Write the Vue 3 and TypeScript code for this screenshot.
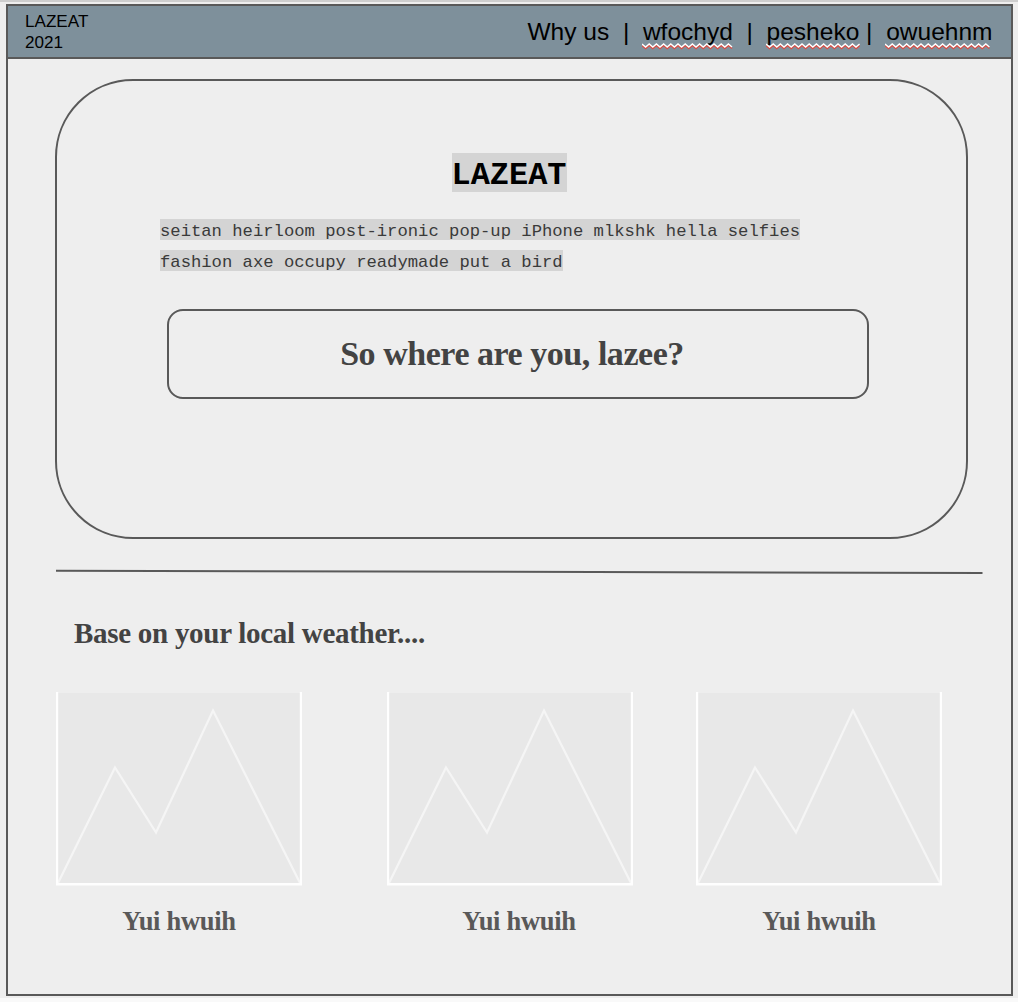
<script setup lang="ts">
interface NavPart {
  text: string
  width?: number
}

interface Card {
  id: number
  label: string
  area: string
}

const nav: NavPart[] = [
  { text: 'Why us' },
  { text: '  |  ' },
  { text: 'wfochyd', width: 91 },
  { text: '  |  ' },
  { text: 'pesheko', width: 94 },
  { text: ' |  ' },
  { text: 'owuehnm', width: 107 },
]

const lines: string[] = [
  'seitan heirloom post-ironic pop-up iPhone mlkshk hella selfies',
  'fashion axe occupy readymade put a bird',
]

const cards: Card[] = [
  { id: 1, label: 'Yui hwuih', area: 'first' },
  { id: 2, label: 'Yui hwuih', area: 'second' },
  { id: 3, label: 'Yui hwuih', area: 'third' },
]

function zigzag(width: number, top: number): string {
  const step = 3.6
  let d = `M0 ${top}`
  for (let i = 1; i * step <= width; i++) {
    d += `L${(i * step).toFixed(1)} ${i % 2 ? top + 3 : top}`
  }
  return d
}
</script>

<template>
  <div class="page">
    <div class="frame">
      <header class="bar">
        <div class="brand">LAZEAT<br />2021</div>
        <nav class="nav">
          <span v-for="(part, i) in nav" :key="i" class="part"
            >{{ part.text
            }}<svg v-if="part.width" class="squiggle" :width="part.width" height="7">
              <path :d="zigzag(part.width, 2.5)" fill="none" stroke="#dc4a41" stroke-width="1.6" />
              <path :d="zigzag(part.width, 1)" fill="none" stroke="#fff" stroke-width="1.4" />
            </svg>
          </span>
        </nav>
      </header>

      <main class="content">
        <section class="hero">
          <h1 class="title">LAZEAT</h1>
          <div class="intro">
            <p v-for="line in lines" :key="line" class="line">{{ line }}</p>
          </div>
          <button class="prompt" type="button"><span>So where are you, lazee?</span></button>
        </section>

        <svg class="rule" width="928" height="6" viewBox="0 0 928 6">
          <line x1="1" y1="1.7" x2="927.5" y2="4" stroke="#595959" stroke-width="2" />
        </svg>

        <h2 class="subtitle">Base on your local weather....</h2>

        <div class="cards">
          <figure v-for="card in cards" :key="card.id" class="card" :class="card.area">
            <svg width="246" height="194" viewBox="0 0 246 194">
              <rect y="1" width="246" height="192" fill="#e8e8e8" />
              <path
                d="M2 191L59 75.5L100 140.5L157 18.5L244 191"
                fill="none"
                stroke="#f5f5f5"
                stroke-width="2.2"
              />
              <path d="M1 0V192.2H245V0" fill="none" stroke="#fefefe" stroke-width="2.4" />
            </svg>
            <figcaption>{{ card.label }}</figcaption>
          </figure>
        </div>
      </main>
    </div>
  </div>
</template>

<style>
body {
  margin: 0;
  background: #eee;
}
</style>

<style scoped>
.page {
  box-sizing: border-box;
  width: 1018px;
  height: 1002px;
  padding: 2px 5px 0 6px;
  border-top: 2px solid #cecece;
  border-bottom: 4px solid #f9f9f9;
  background: #eee;
  overflow: hidden;
}

.frame {
  box-sizing: border-box;
  height: 992px;
  border: 2px solid #595959;
}

.bar {
  box-sizing: border-box;
  display: flex;
  justify-content: space-between;
  height: 53px;
  padding: 5px 18.5px 0 17px;
  border-bottom: 2px solid #595959;
  background: #7e909b;
  color: #000;
  font-family: "Liberation Sans", Arial, sans-serif;
}

.brand {
  font-size: 17.1px;
  line-height: 21px;
}

.nav {
  display: flex;
  padding-top: 7px;
  font-size: 24.54px;
  line-height: 28px;
  white-space: pre;
}

.part {
  position: relative;
}

.squiggle {
  position: absolute;
  left: -1px;
  top: 25px;
}

.content {
  display: flex;
  flex-direction: column;
  padding: 20px 0 0 47px;
}

.hero {
  box-sizing: border-box;
  display: flex;
  flex-direction: column;
  width: 913px;
  height: 460px;
  padding: 72px 97px 0 103px;
  border: 2px solid #595959;
  border-radius: 78px;
}

.title {
  align-self: center;
  margin: 0 11px 0 0;
  padding-top: 6px;
  background: #d4d4d4;
  color: #000;
  font: bold 31.95px/33px "Liberation Mono", "Courier New", monospace;
}

.intro {
  display: flex;
  flex-direction: column;
  align-items: flex-start;
  gap: 10px;
  margin-top: 27px;
}

.line {
  margin: 0;
  padding-top: 4px;
  background: #d4d4d4;
  color: #3a3a3a;
  font: 17.22px/17px "Liberation Mono", "Courier New", monospace;
  white-space: nowrap;
}

.prompt {
  box-sizing: border-box;
  width: 702px;
  height: 90px;
  margin: 38px 0 0 7px;
  padding: 0 12px 0 0;
  border: 2px solid #595959;
  border-radius: 16px;
  background: transparent;
  color: #434343;
  font: bold 34px/40px "Liberation Serif", "Times New Roman", serif;
  letter-spacing: -0.46px;
}

.rule {
  margin-top: 30px;
}

.subtitle {
  margin: 41px 0 0 19px;
  color: #434343;
  font: bold 29px/34px "Liberation Serif", "Times New Roman", serif;
  letter-spacing: -0.28px;
}

.cards {
  display: flex;
  margin: 42px 0 0 1px;
}

.card {
  display: flex;
  flex-direction: column;
  width: 246px;
  margin: 0;
}

.second {
  margin-left: 85px;
}

.third {
  margin-left: 63px;
}

figcaption {
  margin-top: 19px;
  color: #595959;
  font: bold 26.5px/32px "Liberation Serif", "Times New Roman", serif;
  letter-spacing: -0.3px;
  text-align: center;
}

.second figcaption {
  padding-left: 18px;
}
</style>
